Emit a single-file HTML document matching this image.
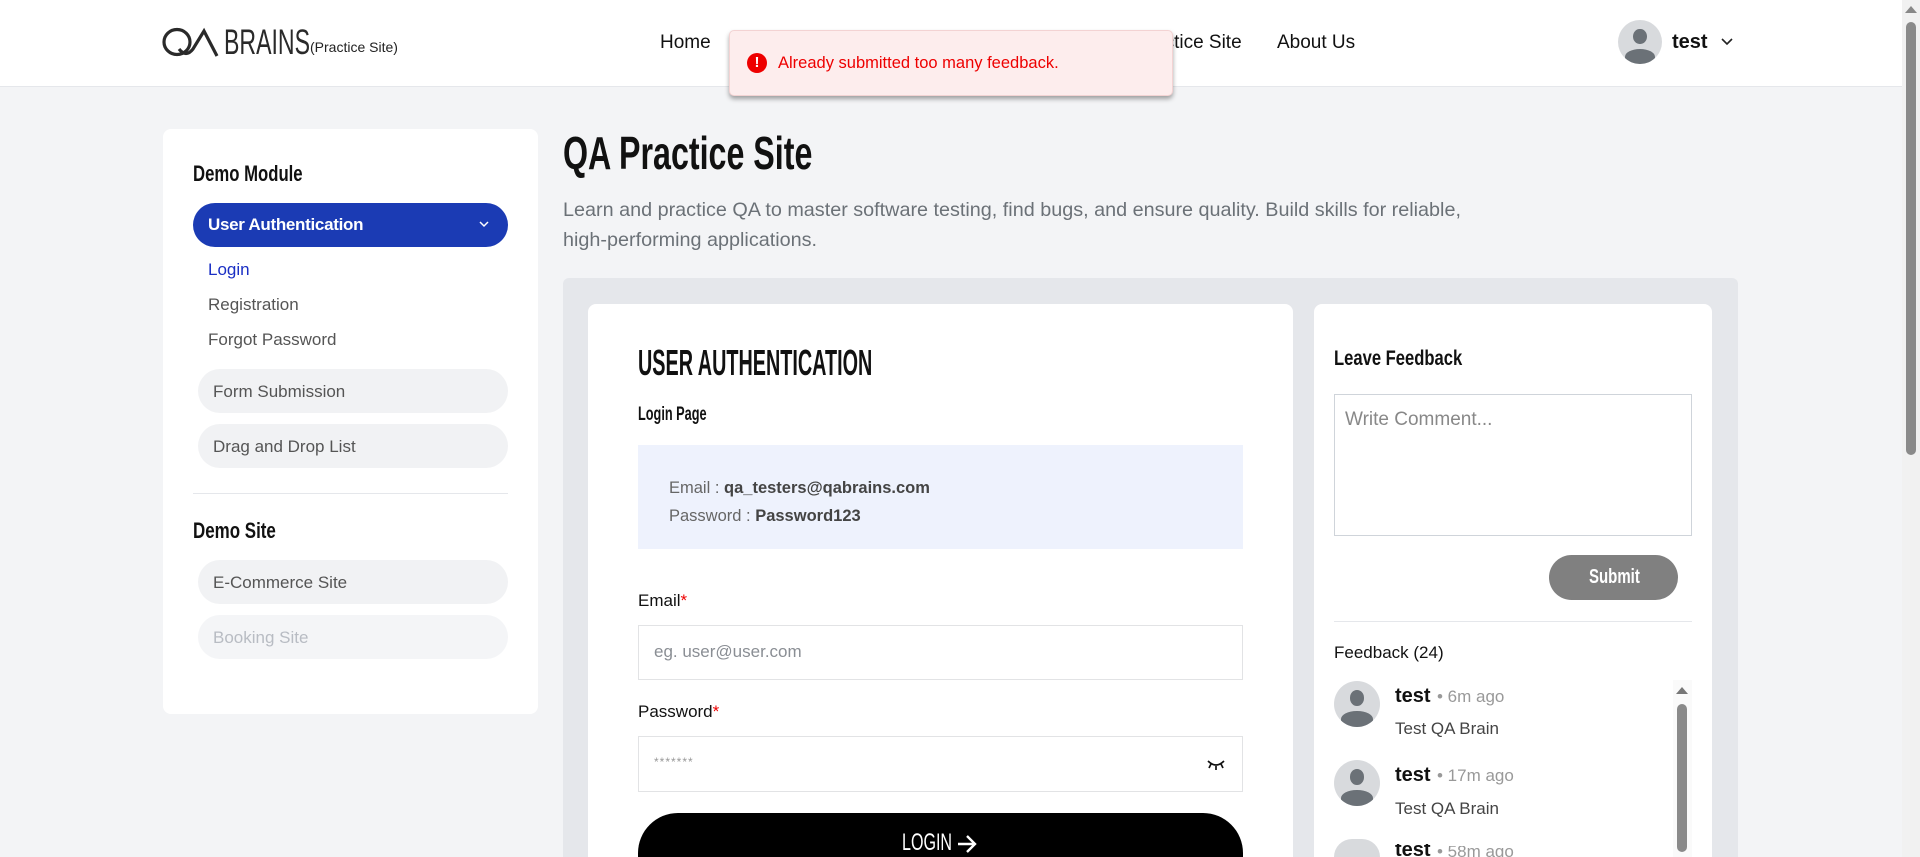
<!DOCTYPE html>
<html style="overflow:hidden"><head><meta charset="utf-8"><style>
*{box-sizing:border-box;margin:0;padding:0}
html,body{width:1920px;height:857px;overflow:hidden}
body{background:#f3f4f6;font-family:"Liberation Sans",sans-serif;position:relative;color:#111}
#w{position:absolute;left:0;top:0;width:1920px;height:857px;overflow:hidden}
.a{position:absolute;white-space:nowrap}
.n{font-family:"Liberation Sans Narrow","Liberation Sans",sans-serif;font-weight:bold;transform-origin:0 0}
.hdr{left:0;top:0;width:1902px;height:87px;background:#fff;border-bottom:1px solid #e5e7eb}
.nav{font-size:19px;color:#111;top:32px}
.card{background:#fff;border-radius:8px 8px 0 0}
.side{font-size:17px;color:#555}
.pill{left:198px;width:310px;height:44px;border-radius:22px;background:#f1f2f4;font-size:17px;color:#555;padding:13px 0 0 15px}
.av{border-radius:50%;background:#d8dadd;overflow:hidden}
.av:before{content:"";position:absolute;left:35%;top:20%;width:30%;height:34%;border-radius:50%;background:#6b7177}
.av:after{content:"";position:absolute;left:16%;top:65%;width:68%;height:35%;border-radius:50% 50% 0 0;background:#6b7177}
</style></head><body><div id="w">
<div class="a hdr"></div>
<svg class="a" style="left:162px;top:27px" width="60" height="32" viewBox="0 0 60 32"><ellipse cx="15" cy="15" rx="13" ry="12.5" fill="none" stroke="#2a2a2a" stroke-width="3.2"/><path d="M17 22 Q24 31 31 22 L42 4 L55 29" fill="none" stroke="#2a2a2a" stroke-width="3.2"/></svg>
<div class="a n" style="left:224px;top:23px;font-size:35px;color:#2a2a2a;font-weight:normal;transform:scaleX(0.66)">BRAINS</div>
<div class="a" style="left:310px;top:39px;font-size:14px;color:#222">(Practice Site)</div>
<div class="a nav" style="left:660px">Home</div>
<div class="a nav" style="left:1135px">Practice Site</div>
<div class="a nav" style="left:1277px">About Us</div>
<div class="a av" style="left:1618px;top:20px;width:44px;height:44px"></div>
<div class="a" style="left:1672px;top:31px;font-size:20px;font-weight:bold;color:#111">test</div>
<svg class="a" style="left:1720px;top:37px" width="14" height="10" viewBox="0 0 14 10"><path d="M2 2 L7 7 L12 2" fill="none" stroke="#222" stroke-width="1.6"/></svg>
<div class="a" style="left:729px;top:30px;width:444px;height:66px;background:#fdeded;border:1px solid #f3d3d3;border-radius:5px;box-shadow:0 3px 5px rgba(0,0,0,.35)"></div>
<div class="a" style="left:747px;top:53px;width:20px;height:20px;border-radius:50%;background:#e00;color:#fff;font-size:15px;font-weight:bold;text-align:center;line-height:20px">!</div>
<div class="a" style="left:778px;top:54px;font-size:16.5px;color:#e00">Already submitted too many feedback.</div>
<div class="a card" style="left:163px;top:129px;width:375px;height:585px;border-radius:8px"></div>
<div class="a n" style="left:193px;top:161px;font-size:22px;transform:scaleX(0.76)">Demo Module</div>
<div class="a" style="left:193px;top:203px;width:315px;height:44px;border-radius:22px;background:#1b3bb4"></div>
<div class="a" style="left:208px;top:215px;font-size:17px;color:#fff;font-weight:bold;letter-spacing:-0.3px">User Authentication</div>
<svg class="a" style="left:478px;top:220px" width="12" height="9" viewBox="0 0 12 9"><path d="M2 2 L6 6 L10 2" fill="none" stroke="#fff" stroke-width="1.5"/></svg>
<div class="a side" style="left:208px;top:260px;color:#1a2fc4">Login</div>
<div class="a side" style="left:208px;top:295px">Registration</div>
<div class="a side" style="left:208px;top:330px">Forgot Password</div>
<div class="a pill" style="top:369px">Form Submission</div>
<div class="a pill" style="top:424px">Drag and Drop List</div>
<div class="a" style="left:193px;top:493px;width:315px;height:1px;background:#e5e7eb"></div>
<div class="a n" style="left:193px;top:518px;font-size:22px;transform:scaleX(0.77)">Demo Site</div>
<div class="a pill" style="top:560px">E-Commerce Site</div>
<div class="a pill" style="top:615px;background:#f4f5f7;color:#b8bcc3">Booking Site</div>
<div class="a n" style="left:563px;top:126px;font-size:46px;transform:scaleX(0.70)">QA Practice Site</div>
<div class="a" style="left:563px;top:195px;font-size:19.8px;color:#6b7177;line-height:30px">Learn and practice QA to master software testing, find bugs, and ensure quality. Build skills for reliable,<br>high-performing applications.</div>
<div class="a" style="left:563px;top:278px;width:1175px;height:579px;background:#e5e7eb;border-radius:6px 6px 0 0"></div>
<div class="a card" style="left:588px;top:304px;width:705px;height:553px"></div>
<div class="a n" style="left:638px;top:342px;font-size:36px;transform:scaleX(0.55)">USER AUTHENTICATION</div>
<div class="a n" style="left:638px;top:404px;font-size:19px;transform:scaleX(0.67)">Login Page</div>
<div class="a" style="left:638px;top:445px;width:605px;height:104px;background:#eef2fd"></div>
<div class="a" style="left:669px;top:474px;font-size:16.5px;color:#666;line-height:28px">Email : <span style="color:#444;font-weight:bold">qa_testers@qabrains.com</span><br>Password : <span style="color:#444;font-weight:bold">Password123</span></div>
<div class="a" style="left:638px;top:591px;font-size:17px;color:#111">Email<span style="color:#e00">*</span></div>
<div class="a" style="left:638px;top:625px;width:605px;height:55px;border:1px solid #e2e3e5;background:#fff"></div>
<div class="a" style="left:654px;top:642px;font-size:17px;color:#8a8e94">eg. user@user.com</div>
<div class="a" style="left:638px;top:702px;font-size:17px;color:#111">Password<span style="color:#e00">*</span></div>
<div class="a" style="left:638px;top:736px;width:605px;height:56px;border:1px solid #e2e3e5;background:#fff"></div>
<div class="a" style="left:654px;top:755px;font-size:12px;color:#999;letter-spacing:1px">*******</div>
<svg class="a" style="left:1207px;top:759px" width="18" height="12" viewBox="0 0 18 12"><path d="M1 2 Q9 10 17 2 M4 5 L2 9 M9 7 L9 11 M14 5 L16 9" fill="none" stroke="#111" stroke-width="1.7"/></svg>
<div class="a" style="left:638px;top:813px;width:605px;height:44px;background:#000;border-radius:40px 40px 0 0"></div>
<div class="a n" style="left:902px;top:830px;font-size:24px;line-height:26px;color:#fff;font-weight:normal;transform:scaleX(0.67)">LOGIN</div>
<svg class="a" style="left:956px;top:833px" width="22" height="22" viewBox="0 0 22 22"><path d="M2 11 H19 M11 3 L19 11 L11 19" fill="none" stroke="#fff" stroke-width="2.4"/></svg>
<div class="a card" style="left:1314px;top:304px;width:398px;height:553px"></div>
<div class="a n" style="left:1334px;top:347px;font-size:21px;transform:scaleX(0.79)">Leave Feedback</div>
<div class="a" style="left:1334px;top:394px;width:358px;height:142px;border:1px solid #cfd4da"></div>
<div class="a" style="left:1345px;top:409px;font-size:19px;color:#888">Write Comment...</div>
<div class="a" style="left:1549px;top:555px;width:129px;height:45px;border-radius:23px;background:#808080"></div>
<div class="a n" style="left:1589px;top:566px;font-size:20px;color:#fff;transform:scaleX(0.75)">Submit</div>
<div class="a" style="left:1334px;top:621px;width:358px;height:1px;background:#e5e7eb"></div>
<div class="a" style="left:1334px;top:643px;font-size:17px;color:#111">Feedback (24)</div>
<div class="a av" style="left:1334px;top:681px;width:46px;height:46px"></div>
<div class="a" style="left:1395px;top:685px;font-size:20px;font-weight:bold">test</div>
<div class="a" style="left:1437px;top:687px;font-size:17px;color:#999">• 6m ago</div>
<div class="a" style="left:1395px;top:719px;font-size:17px;color:#444">Test QA Brain</div>
<div class="a av" style="left:1334px;top:760px;width:46px;height:46px"></div>
<div class="a" style="left:1395px;top:764px;font-size:20px;font-weight:bold">test</div>
<div class="a" style="left:1437px;top:766px;font-size:17px;color:#999">• 17m ago</div>
<div class="a" style="left:1395px;top:799px;font-size:17px;color:#444">Test QA Brain</div>
<div class="a" style="left:1334px;top:839px;width:46px;height:18px;border-radius:23px 23px 0 0;background:#d8dadd"></div>
<div class="a" style="left:1395px;top:844px;font-size:20px;line-height:13px;height:13px;overflow:hidden;font-weight:bold">test</div>
<div class="a" style="left:1437px;top:846px;font-size:17px;line-height:11px;height:11px;overflow:hidden;color:#999">• 58m ago</div>
<div class="a" style="left:1673px;top:680px;width:19px;height:177px;background:#fafafa"></div>
<div class="a" style="left:1676px;top:687px;width:0;height:0;border-left:6px solid transparent;border-right:6px solid transparent;border-bottom:7px solid #777"></div>
<div class="a" style="left:1677px;top:704px;width:10px;height:148px;border-radius:5px;background:#8a8a8a"></div>
<div class="a" style="left:1902px;top:0;width:18px;height:857px;background:#f1f1f1"></div>
<div class="a" style="left:1905px;top:6px;width:0;height:0;border-left:6px solid transparent;border-right:6px solid transparent;border-bottom:7px solid #888"></div>
<div class="a" style="left:1906px;top:22px;width:10px;height:433px;border-radius:5px;background:#8a8a8a"></div>
</div></body></html>
